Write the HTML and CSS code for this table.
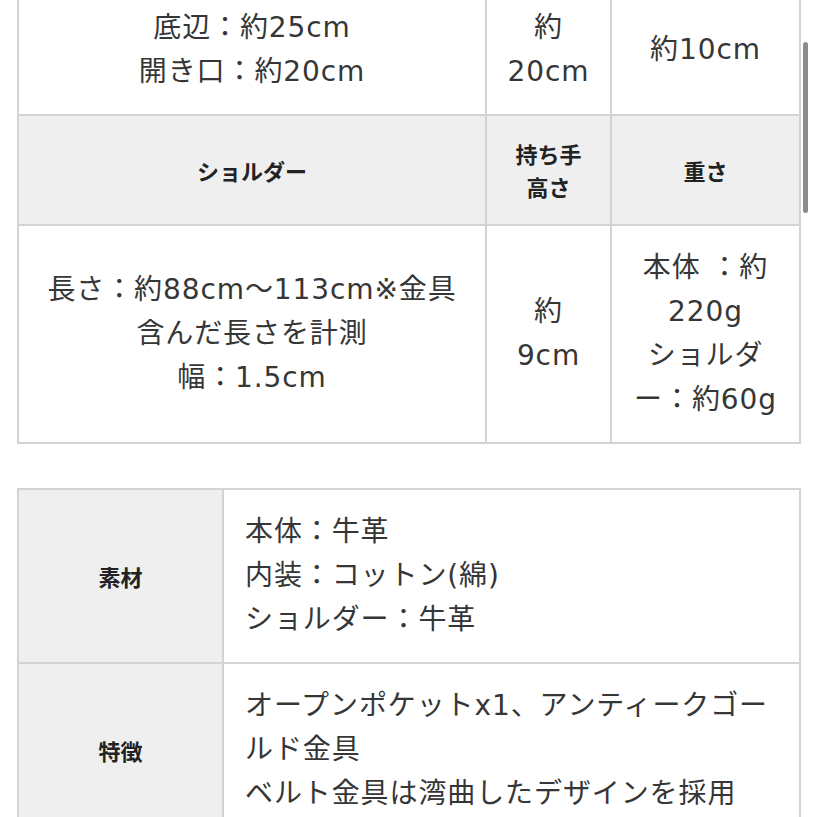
FILE: index.html
```html
<!DOCTYPE html>
<html lang="ja">
<head>
<meta charset="utf-8">
<link rel="stylesheet" href="styles.css">
</head>
<body>
<div class="page">
  <table class="size-table">
    <colgroup>
      <col class="c1">
      <col class="c2">
      <col class="c3">
    </colgroup>
    <tr>
      <td>底辺：約25cm<br>開き口：約20cm</td>
      <td>約20cm</td>
      <td>約10cm</td>
    </tr>
    <tr>
      <th>ショルダー</th>
      <th>持ち手高さ</th>
      <th>重さ</th>
    </tr>
    <tr>
      <td>長さ：約88cm〜113cm※金具含んだ長さを計測<br>幅：1.5cm</td>
      <td>約9cm</td>
      <td>本体 ：約220g<br>ショルダー：約60g</td>
    </tr>
  </table>

  <table class="spec-table">
    <colgroup>
      <col class="s1">
      <col class="s2">
    </colgroup>
    <tr>
      <th>素材</th>
      <td>本体：牛革<br>内装：コットン(綿)<br>ショルダー：牛革</td>
    </tr>
    <tr>
      <th>特徴</th>
      <td>オープンポケットx1、アンティークゴールド金具<br>ベルト金具は湾曲したデザインを採用</td>
    </tr>
  </table>
</div>
<div class="scroll-indicator"></div>
</body>
</html>
```
FILE: styles.css
```css
html, body {
  margin: 0;
  padding: 0;
  background: #ffffff;
  overflow: hidden;
}

body {
  font-family: "DejaVu Sans", "Noto Sans CJK JP", sans-serif;
  color: #363636;
}

.page {
  padding: 0 18px 0 17px;
}

table {
  border-collapse: collapse;
  table-layout: fixed;
  width: 782px;
}

td, th {
  border: 2px solid #d3d3d3;
  padding: 20px 20px;
  vertical-align: middle;
}

td {
  font-size: 28px;
  line-height: 44px;
  font-weight: 400;
  letter-spacing: 0.9px;
}

th {
  font-family: "Noto Sans CJK JP", sans-serif;
  font-size: 22px;
  line-height: 33px;
  font-weight: 700;
  color: #222222;
  background: #efefef;
}

.size-table {
  margin-top: -16px;
  margin-bottom: 44px;
}

.size-table td, .size-table th {
  text-align: center;
}

.size-table th {
  padding-top: 21px;
  padding-bottom: 21px;
}

.c1 { width: 468px; }
.c2 { width: 125px; }
.c3 { width: 189px; }

.s1 { width: 205px; }
.s2 { width: 577px; }

.spec-table td {
  text-align: left;
  padding-left: 21px;
}

.scroll-indicator {
  position: fixed;
  top: 42px;
  right: 9px;
  width: 5px;
  height: 171px;
  border-radius: 3px;
  background: #8c8c8c;
}
```
